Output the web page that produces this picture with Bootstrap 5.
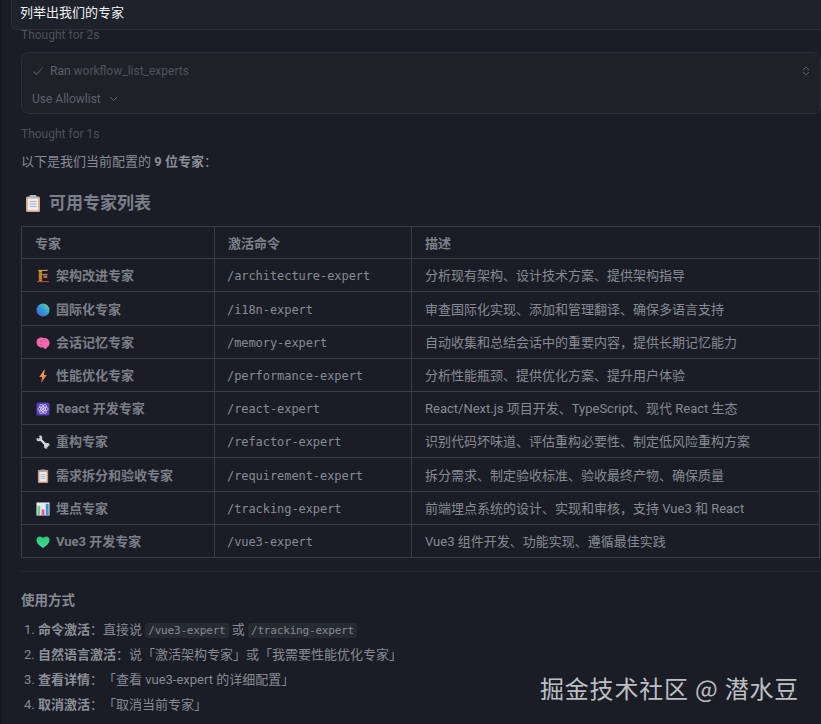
<!DOCTYPE html>
<html lang="zh-CN">
<head>
<meta charset="utf-8">
<title>专家列表</title>
<link href="https://cdn.jsdelivr.net/npm/bootstrap@5.3.0/dist/css/bootstrap.min.css" rel="stylesheet">
<style>
html,body{height:100%}
body{background:#1a1d25;color:#878b94;font-family:Roboto,"Noto Sans CJK SC",sans-serif;font-size:13px;line-height:20px;overflow:hidden;position:relative;text-spacing-trim:space-all}
.app-shell{height:724px;overflow:hidden;display:flex;flex-direction:column}
.rail-edge{position:absolute;left:0;top:0;bottom:0;width:2px;background:#14161b}
.query-bar{margin-left:11px;height:30px;flex:none;background:#1e222b;border:1px solid #2c3038;border-width:0 0 1px 1px;border-bottom-left-radius:6px;padding:3px 0 0 8px;color:#f0f1f3;font-size:13px;line-height:20px;position:relative;z-index:1}
.chat-body{padding-left:21px;margin-top:-5px}
.thought{color:#4d515a;font-size:12px;line-height:20px}
.tool-box{margin-top:7px;height:62px;background:#1e2127;border:1px solid #2b2f36;border-radius:8px;padding:8px 10px 0 10px;color:#4f535c;font-size:12px}
.tool-line{height:20px}
.tool-line b{font-weight:400;color:#5d616a}
.tool-label{margin-left:6px}
.tool-allow{margin-top:8px;color:#5d616a}
.after-box{margin-top:10px}
.intro{margin-top:8px;margin-bottom:0;height:20px;color:#878b94}
.intro b,.usage-list b{font-weight:700;color:#8b8f98}
.sect-title{margin:19px 0 0;height:24px;font-size:17px;line-height:24px;font-weight:700;color:#7a7f8a;display:flex;align-items:center;gap:9px;padding-left:5px}
.expert-table{--bs-table-bg:transparent;--bs-table-color:#878b94;--bs-table-border-color:#3b3e44;margin:11px 0 0;width:799px;table-layout:fixed;color:#878b94;border-color:#3b3e44}
.col-a{width:193px}
.col-b{width:197px}
.expert-table th,.expert-table td{height:33px;padding:2px 0 0 13px;vertical-align:middle;font-size:13px;line-height:20px;white-space:nowrap;box-shadow:none}
.expert-table th{height:32px;font-weight:700;color:#7d818a}
.expert-table tr.tall-row td{height:34px}
.expert-table td.nm{font-weight:700;color:#7b7f88;padding-left:14px}
.expert-table td.cmd{font-family:"DejaVu Sans Mono",monospace;font-size:12px;letter-spacing:-.07px;padding-left:12px;color:#878b94}
.nm-wrap{display:flex;align-items:center;gap:6px}
.rule-line{margin:13px 0 0;border:0;border-top:1px solid #262a31;opacity:1}
.usage-title{margin:18px 0 0;font-size:13.5px;line-height:20px;font-weight:700;color:#878b94}
.usage-list{margin:10px 0 0;padding:0 0 0 3px;list-style:none}
.usage-list li{height:25px;line-height:20px;white-space:nowrap}
.pill-code{font-family:"DejaVu Sans Mono",monospace;font-size:11px;letter-spacing:-.18px;background:#262a31;border-radius:3px;padding:1px 3px;color:#878b94}
.watermark{position:absolute;left:540px;top:673px;font-size:24px;line-height:30px;letter-spacing:.8px;color:#bdbfc2;white-space:nowrap;font-family:"Noto Sans CJK SC","Noto Sans",sans-serif;z-index:2}
.ico{flex:none;display:block}
</style>
</head>
<body>
<div class="rail-edge"></div>
<div class="app-shell">
  <div class="query-bar">列举出我们的专家</div>
  <div class="chat-body">
    <div class="thought">Thought for 2s</div>
    <div class="tool-box">
      <div class="tool-line d-flex align-items-center">
        <svg class="ico" width="12" height="12" viewBox="0 0 12 12" fill="none" stroke="#4f535c" stroke-width="1.1"><path d="M1.500 6.500 4.500 9.500 10.500 2.500"/></svg>
        <span class="tool-label"><b>Ran</b> workflow_list_experts</span>
        <svg class="ico ms-auto" width="8" height="10" viewBox="0 0 8 10" fill="none" stroke="#5a5d64" stroke-width="1"><path d="M1 4 4 1 7 4M1 6 4 9 7 6"/></svg>
      </div>
      <div class="tool-allow d-flex align-items-center">
        <span>Use Allowlist</span>
        <svg class="ico ms-2" width="9" height="6" viewBox="0 0 9 6" fill="none" stroke="#5d616a" stroke-width="1"><path d="M1 1 4.500 4.500 8 1"/></svg>
      </div>
    </div>
    <div class="thought after-box">Thought for 1s</div>
    <p class="intro">以下是我们当前配置的 <b>9 位专家</b>：</p>
    <h2 class="sect-title">
      <svg class="ico" width="14" height="17" viewBox="0 0 14 17"><rect x="0" y="1.500" width="14" height="15.500" rx="1.500" fill="#d9a98a"/><rect x="1.800" y="3.500" width="10.400" height="11.800" fill="#eceef2"/><rect x="3.500" y="0" width="7" height="3.500" rx="1" fill="#b4b8c0"/><path d="M3.500 6.500h7M3.500 9h7M3.500 11.500h7" stroke="#a9adb6" stroke-width="1"/></svg>
      <span>可用专家列表</span>
    </h2>
    <table class="table table-bordered expert-table">
      <colgroup><col class="col-a"><col class="col-b"><col></colgroup>
      <thead><tr><th>专家</th><th>激活命令</th><th>描述</th></tr></thead>
      <tbody>
        <tr><td class="nm"><div class="nm-wrap">
          <svg class="ico" width="14" height="14" viewBox="0 0 15 15"><path d="M2.500 1.500h10" stroke="#c9a050" stroke-width="1.200"/><rect x="3" y="2" width="3.500" height="11" fill="#d49a3a"/><path d="M3 4h3.500M3 6.500h3.500M3 9h3.500M3 11.500h3.500" stroke="#7a4a1e" stroke-width=".8"/><path d="M6.500 6h6" stroke="#c9a050" stroke-width="1"/><rect x="8" y="7" width="4" height="2.500" fill="#d2685e"/><path d="M1 13.500h13" stroke="#c2403e" stroke-width="1.200"/></svg>
          <span>架构改进专家</span></div></td><td class="cmd">/architecture-expert</td><td>分析现有架构、设计技术方案、提供架构指导</td></tr>
        <tr class="tall-row"><td class="nm"><div class="nm-wrap">
          <svg class="ico" width="14" height="14" viewBox="0 0 15 15"><defs><linearGradient id="g1" x1="0" y1="1" x2="1" y2="0"><stop offset="0" stop-color="#5a4fd0"/><stop offset=".5" stop-color="#2f9bd8"/><stop offset="1" stop-color="#6fd488"/></linearGradient></defs><circle cx="7.500" cy="7.500" r="7" fill="url(#g1)"/></svg>
          <span>国际化专家</span></div></td><td class="cmd">/i18n-expert</td><td>审查国际化实现、添加和管理翻译、确保多语言支持</td></tr>
        <tr><td class="nm"><div class="nm-wrap">
          <svg class="ico" width="14" height="14" viewBox="0 0 15 15"><path d="M.5 6.500C.5 3.500 3 1.500 6 1.500c1 0 2 .3 2.800.8C12 2 14.500 4.500 14.500 7.500c0 2.500-1.300 4.300-3 4.800L11 14l-2.500-.5-.6-1.500c-1 .3-2.400.3-3.400 0C2.200 11.700.5 9.200.5 6.500Z" fill="#f06ab0"/><path d="M4 5.500c1.500-1 2.500 0 3 1M8 4c1.500 0 3 1 3 3M4 9c1.500 0 3 0 4-1" stroke="#c84a92" stroke-width=".8" fill="none"/></svg>
          <span>会话记忆专家</span></div></td><td class="cmd">/memory-expert</td><td>自动收集和总结会话中的重要内容，提供长期记忆能力</td></tr>
        <tr><td class="nm"><div class="nm-wrap">
          <svg class="ico" width="14" height="14" viewBox="0 0 15 15"><defs><linearGradient id="g2" x1="0" y1="0" x2="0" y2="1"><stop offset="0" stop-color="#f6b04a"/><stop offset="1" stop-color="#ee6a3a"/></linearGradient></defs><path d="M9.500 0 3.500 8.500h3L5.500 15 11.500 6.300H8.500Z" fill="url(#g2)"/></svg>
          <span>性能优化专家</span></div></td><td class="cmd">/performance-expert</td><td>分析性能瓶颈、提供优化方案、提升用户体验</td></tr>
        <tr><td class="nm"><div class="nm-wrap">
          <svg class="ico" width="14" height="14" viewBox="0 0 15 15"><rect x=".500" y=".500" width="14" height="14" rx="2" fill="#5b3fb8"/><g fill="none" stroke="#e6dcff" stroke-width=".8"><ellipse cx="7.500" cy="7.500" rx="5.500" ry="2.200"/><ellipse cx="7.500" cy="7.500" rx="5.500" ry="2.200" transform="rotate(60 7.500 7.500)"/><ellipse cx="7.500" cy="7.500" rx="5.500" ry="2.200" transform="rotate(120 7.500 7.500)"/></g><circle cx="7.500" cy="7.500" r="1.200" fill="#e6dcff"/></svg>
          <span>React 开发专家</span></div></td><td class="cmd">/react-expert</td><td>React/Next.js 项目开发、TypeScript、现代 React 生态</td></tr>
        <tr><td class="nm"><div class="nm-wrap">
          <svg class="ico" width="14" height="14" viewBox="0 0 15 15"><path d="M4 4 12 12" stroke="#d5d7dc" stroke-width="2.600" stroke-linecap="round"/><path d="M.5 4.500 1 3l2.300 2 1.700-1.700L3 1l1.500-.5C6.500.5 7.300 2.800 6.300 4.500L4.500 6.300C2.800 7 .5 6.500.5 4.500Z" fill="#d5d7dc"/><path d="M14.500 10.500 14 12l-2-1.700-1.700 1.700 2 2.300-1.500.5c-2 0-2.800-2.300-1.800-4l1.800-1.800c1.700-.7 3.700-.2 3.700 1.500Z" fill="#d5d7dc"/></svg>
          <span>重构专家</span></div></td><td class="cmd">/refactor-expert</td><td>识别代码坏味道、评估重构必要性、制定低风险重构方案</td></tr>
        <tr class="tall-row"><td class="nm"><div class="nm-wrap">
          <svg class="ico" width="14" height="14" viewBox="0 0 15 15"><rect x="2" y="1" width="11" height="14" rx="1" fill="#c9957a"/><rect x="3.500" y="3" width="8" height="10.500" fill="#e6e8ee"/><rect x="5" y=".5" width="5" height="2.500" fill="#9ea2ab"/><path d="M5 6h5M5 8h5M5 10h5" stroke="#a3a7b0" stroke-width=".8"/></svg>
          <span>需求拆分和验收专家</span></div></td><td class="cmd">/requirement-expert</td><td>拆分需求、制定验收标准、验收最终产物、确保质量</td></tr>
        <tr><td class="nm"><div class="nm-wrap">
          <svg class="ico" width="14" height="14" viewBox="0 0 15 15"><rect x=".500" y=".500" width="14" height="14" fill="#e8ebee"/><rect x="1.500" y="4" width="3" height="10" fill="#6fcf86"/><rect x="6" y="8" width="3" height="6" fill="#e0569a"/><rect x="10.500" y="2" width="3" height="12" fill="#3f8fd8"/></svg>
          <span>埋点专家</span></div></td><td class="cmd">/tracking-expert</td><td>前端埋点系统的设计、实现和审核，支持 Vue3 和 React</td></tr>
        <tr><td class="nm"><div class="nm-wrap">
          <svg class="ico" width="14" height="14" viewBox="0 0 15 14"><defs><linearGradient id="g3" x1="0" y1="0" x2="0" y2="1"><stop offset="0" stop-color="#2fc47a"/><stop offset="1" stop-color="#3fdc96"/></linearGradient></defs><path d="M7.500 13.500C3 10.500.5 8 .5 4.800.5 2.500 2.200 1 4 1c1.500 0 2.800.8 3.500 2C8.200 1.800 9.500 1 11 1c1.800 0 3.500 1.500 3.500 3.800 0 3.200-2.500 5.700-7 8.700Z" fill="url(#g3)"/></svg>
          <span>Vue3 开发专家</span></div></td><td class="cmd">/vue3-expert</td><td>Vue3 组件开发、功能实现、遵循最佳实践</td></tr>
      </tbody>
    </table>
    <hr class="rule-line">
    <div class="usage-title">使用方式</div>
    <ol class="usage-list">
      <li>1. <b>命令激活</b>：直接说 <span class="pill-code">/vue3-expert</span> 或 <span class="pill-code">/tracking-expert</span></li>
      <li>2. <b>自然语言激活</b>：说「激活架构专家」或「我需要性能优化专家」</li>
      <li>3. <b>查看详情</b>：「查看 vue3-expert 的详细配置」</li>
      <li>4. <b>取消激活</b>：「取消当前专家」</li>
    </ol>
  </div>
</div>
<div class="watermark">掘金技术社区 @ 潜水豆</div>
<script src="https://cdn.jsdelivr.net/npm/bootstrap@5.3.0/dist/js/bootstrap.bundle.min.js"></script>
</body>
</html>
